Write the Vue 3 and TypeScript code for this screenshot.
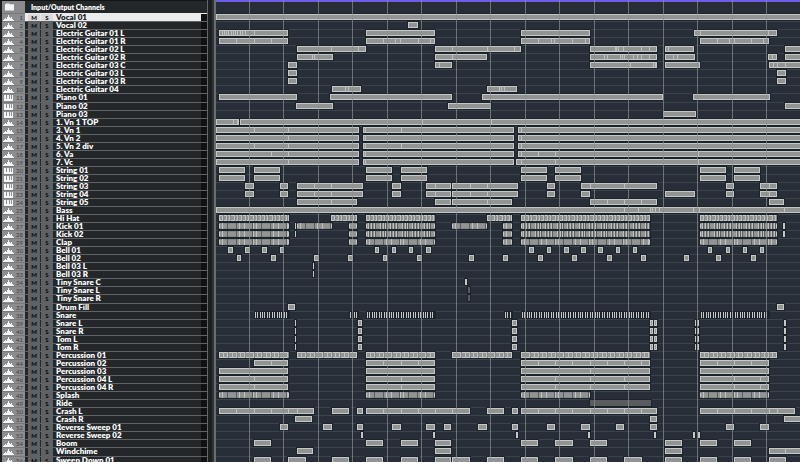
<script setup lang="ts">
type Kind = 'audio' | 'midi'
type Style = 'clip' | 'hat' | 'kick' | 'pulse' | 'ticks' | 'perc' | 'muted'

interface Track {
  name: string
  kind: Kind
  style: Style
  clips: string
}

interface Lane {
  halo: string
  edge: string
  body: string
  light: string
  shade: string
  dark: string
}

// Position on the timeline ruler where the visible range begins.
const VIEW_START = 216
const VIEW_END = 2400

const track = (name: string, clips: string, style: Style = 'clip', kind: Kind = 'audio'): Track => ({
  name,
  kind,
  style,
  clips,
})

// Clips are written as "start-end:cut,cut"; separate clips are divided by spaces.
const full = `216-${VIEW_END}`
const pads = '219-245 254-280 366-392 401-427 521-547 555-581 700-726 734-760'
const hats = '219-289 331-357 366-435 487-512 521-650 700-777'
const hits = '295-296 358-362 512-517 650-653 654-657 695-696 697-699 784-786'
const loops = '219-288:254 366-435:401 521-650:555,590,624 700-769:734,760'

const tracks: Track[] = [
  track('Vocal 01', full),
  track('Vocal 02', '408-418'),
  track('Electric Guitar 01 L', '219-288:222,224,226,228,231,233,235,237,240,242,245,254,283 366-435 521-590 694-777:697,700,768'),
  track('Electric Guitar 01 R', '219-288:236,249,254,271,283 366-435:383,395,400,418,430 521-590:538,551,554,572,585 700-769:717,729,734,751,763'),
  track('Electric Guitar 02 L', '297-366:331,358 435-521:452,487,514 590-657:615,616,618,623,641,649 665-694:668 785-2400'),
  track('Electric Guitar 02 R', '297-333:312,314 435-487:452 590-657:604,607,620,622,624,633,637,641,649 665-695:673,677 768-777:772 785-2400'),
  track('Electric Guitar 03 C', '288-297 435-452:439 590-657:628,630,653,655 665-700 769-2400:773,777,785'),
  track('Electric Guitar 03 L', '288-297 777-786'),
  track('Electric Guitar 03 R', '288-297 777-786'),
  track('Electric Guitar 04', '332-361:345,348 487-517:499,501,504'),
  track('Piano 01', '219-297 330-452 482-663 693-770', 'clip', 'midi'),
  track('Piano 02', '296-333 448-491 785-2400', 'clip', 'midi'),
  track('Piano 03', '663-696', 'clip', 'midi'),
  track('1. Vn 1 TOP', '216-239:233,237 240-2400:387,422,491,594'),
  track('3. Vn 1', '216-359:254,288 363-514:365,401 518-2400:521'),
  track('4. Vn 2', '216-359:288 363-514:365 518-2400:521'),
  track('5. Vn 2 div', '216-359:254,288 363-514:365,401 518-2400:521'),
  track('6. Va', '216-359:271,288 363-514:365,456 518-2400:521,538,555,698'),
  track('7. Vc', '216-359:288 363-514:365 516-2400:521,555,698'),
  track('String 01', pads, 'clip', 'midi'),
  track('String 02', pads, 'clip', 'midi'),
  track('String 03', '245-254 280-288 297-363:314,331 392-401 426-451:435 452-518:470,487 547-555 581-657:590,624 726-734 760-777:769', 'clip', 'midi'),
  track('String 04', '245-254 280-288 297-363:314,331 392-401 426-451:435 452-518:470,487 547-555 581-590 665-695 726-734 760-777:769', 'clip', 'midi'),
  track('String 05', '297-357:331 435-451 452-512:487 590-657:607,624,641 769-784', 'clip', 'midi'),
  track('Bass', `${full}:624,638,650,652,655,659,693,699,784`),
  track('Hi Hat', hats, 'hat'),
  track('Kick 01', '219-289 295-296 297-332 349-357 366-435 452-487 503-512 521-650 700-777 783-785', 'kick'),
  track('Kick 02', '219-289 295-296 349-357 366-435 503-512 521-650 700-777 783-785', 'kick'),
  track('Clap', '219-289 349-357 366-435 503-512 521-650 700-777', 'pulse'),
  track('Bell 01', '228-233 245-250 262-267 280-284 375-379 392-396 409-413 426-431 529-534 547-551 564-569 581-586 598-603 616-620 633-637 708-712 726-730 743-747 760-764'),
  track('Bell 02', '237-241 271-276 314-319 348-353 383-387 417-422 469-474 503-508 538-543 572-577 607-612 641-646 684-689 716-721 751-756'),
  track('Bell 03 L', '313-314'),
  track('Bell 03 R', '313-314'),
  track('Tiny Snare C', '465-467'),
  track('Tiny Snare L', '468-470', 'muted'),
  track('Tiny Snare R', '468-470', 'muted'),
  track('Drum Fill', '288-295 777-784'),
  track('Snare', '255-289 350-351 354-358 367-435 505-512 522-650 701-769', 'ticks'),
  track('Snare L', hits),
  track('Snare R', hits),
  track('Tom L', hits),
  track('Tom R', hits),
  track('Percussion 01', '219-289 297-357 366-435 452-512 521-650 700-777', 'perc'),
  track('Percussion 02', '254-288:271 366-435:383,401,418 521-650:538,555,572,590,607,624,641 700-769:717,734,751'),
  track('Percussion 03', '219-288 366-435 521-650:590 700-769'),
  track('Percussion 04 L', loops),
  track('Percussion 04 R', loops),
  track('Splash', '219-289 366-435 521-590 700-769', 'pulse'),
  track('Ride', '590-651', 'muted'),
  track('Crash L', '219-314:236,254,271,288,297 332-349 357-363 366-470:383,401,418,435,452 487-504 512-518 521-657:538,555,572,590,607,624,641 700-795:717,734,751,769,777'),
  track('Crash R', '295-312 650-657 784-2400'),
  track('Reverse Sweep 01', '280-288 323-332 357-363 392-401 426-435 444-451 478-487 512-518 547-555 581-590 616-624 650-657 726-734 760-769'),
  track('Reverse Sweep 02', '361-363 433-435 516-518 588-590 654-656 693-695 698-700'),
  track('Boom', '254-271 366-383 401-418 435-451 521-538 555-573 590-607 665-682 700-717 734-751'),
  track('Windchime', '297-313 435-451 665-682 769-2400:785'),
  track('Sweep Down 01', '254-271 288-306 332-349 366-383 401-418 435-451 452-470 487-504 521-538 555-573 590-607 624-642 665-682 700-717 734-751 769-786'),
]

// Tracks that take up the spare pixel of the list's uneven row spacing.
const tall = new Set([10, 35, 54])

const box = (x: number, y: number, w: number, h: number) => `M${x} ${y}h${w}v${h}h${-w}z`

// Marks inside a rhythmic clip: cycles through the steps, giving each position.
function cycle(start: number, end: number, steps: number[]): number[] {
  const marks: number[] = []
  let x = start
  for (let i = 0; x < end; i++) {
    marks.push(x)
    x += steps[i % steps.length]
  }
  return marks
}

function draw(t: Track): Lane {
  const lane: Lane = { halo: '', edge: '', body: '', light: '', shade: '', dark: '' }
  for (const item of t.clips.split(' ')) {
    const [range, cuts] = item.split(':')
    const [from, to] = range.split('-').map(Number)
    const x = from - VIEW_START
    const end = to - VIEW_START
    const w = end - x
    lane.halo += box(x - 1, 0, w + 2, 8)
    if (t.style === 'muted') {
      lane.dark += box(x, 1, w, 6)
      continue
    }
    if (t.style === 'ticks') {
      for (const m of cycle(x, end, [2, 3, 2, 2, 3, 2, 3])) lane.edge += box(m, 1, 1, 6)
      continue
    }
    lane.edge += box(x, 1, w, 6)
    if (w > 2) lane.body += box(x + 1, 2, w - 2, 4)
    if (cuts) for (const c of cuts.split(',')) lane.light += box(Number(c) - VIEW_START, 1, 1, 6)
    if (w < 3) continue
    if (t.style === 'hat') {
      for (const m of cycle(x + 3, end - 1, [4, 3, 5, 3, 4])) {
        lane.light += box(m, 1, 1, 6)
        lane.shade += box(m + 1, 1, 1, 6)
      }
    } else if (t.style === 'perc') {
      for (const m of cycle(x + 4, end - 1, [4, 5, 4, 4])) lane.light += box(m, 1, 1, 6)
      for (const m of cycle(x + 8, end - 1, [9, 8])) lane.shade += box(m + 1, 1, 1, 6)
    } else if (t.style === 'kick' || t.style === 'pulse') {
      lane.shade += box(x, 1, w, 1) + box(x, 6, w, 1)
      const busy = t.style === 'kick' && w > 40 && from > 300
      if (busy) {
        for (const m of cycle(x + 2, end - 1, [3, 3, 6, 3, 2, 5])) {
          lane.light += box(m, 1, 1, 6)
          lane.dark += box(m + 1, 1, 1, 6)
        }
      } else {
        for (const m of cycle(x + 3, end - 1, [5, 9, 3])) lane.light += box(m, 1, 1, 6)
        for (const m of cycle(x + 8, end - 1, [9, 16, 9])) lane.dark += box(m, 1, 1, 6)
      }
    }
  }
  return lane
}

const lanes = tracks.map(draw)
const bars = Array.from({ length: 60 }, (_, i) => Math.round(33 + i * 34.47))
</script>

<template>
  <main class="project">
    <section class="tracks">
      <header class="heading">
        <span class="gutter">
          <svg class="folder" viewBox="0 0 10 8" aria-hidden="true">
            <path d="M0 1h1V0h4v1h5v7H0z" />
          </svg>
        </span>
        <span class="title">Input/Output Channels</span>
      </header>
      <ol class="list">
        <li
          v-for="(t, i) in tracks"
          :key="t.name"
          class="row"
          :class="{ tall: tall.has(i), selected: i === 0 }"
        >
          <span class="gutter">
            <svg v-if="t.kind === 'audio'" class="icon" viewBox="0 0 11 6" aria-hidden="true">
              <path d="M0 6V5h1V4h1V3h1v1h1V2h1V0h1v2h1v1h1V2h1v2h1v1h1v1z" />
            </svg>
            <svg v-else class="icon" viewBox="0 0 11 6" aria-hidden="true">
              <path d="M1 0h2v4h1V0h2v4h1V0h1v4h1V0h1v6H1z" />
            </svg>
            <span class="number">{{ i + 1 }}</span>
          </span>
          <button class="toggle" type="button" :aria-label="`Mute ${t.name}`">M</button>
          <button class="toggle" type="button" :aria-label="`Solo ${t.name}`">S</button>
          <span class="name">{{ t.name }}</span>
          <span class="meter"></span>
        </li>
      </ol>
    </section>
    <div class="divider"></div>
    <section class="timeline">
      <div class="ruler"></div>
      <div class="lanes">
        <svg
          v-for="(lane, i) in lanes"
          :key="i"
          class="lane"
          :class="{ tall: tall.has(i) }"
          shape-rendering="crispEdges"
          aria-hidden="true"
        >
          <path class="halo" :d="lane.halo" />
          <path class="edge" :d="lane.edge" />
          <path class="body" :d="lane.body" />
          <path class="shade" :d="lane.shade" />
          <path class="light" :d="lane.light" />
          <path class="dark" :d="lane.dark" />
        </svg>
      </div>
      <svg class="bars" shape-rendering="crispEdges" aria-hidden="true">
        <rect v-for="x in bars" :key="x" :x="x" y="0" width="1" height="100%" />
      </svg>
    </section>
  </main>
</template>

<style>
body {
  margin: 0;
  background: #1c1e20;
}
</style>

<style scoped>
.project {
  display: flex;
  height: 100vh;
  overflow: hidden;
  background: #1f2225;
  color: #ffffff;
  font-family: Lato, 'Open Sans', sans-serif;
  font-size: 8px;
  font-weight: 800;
}

.tracks {
  flex: none;
  width: 207px;
  border-right: 1px solid #64676a;
}

.heading {
  display: flex;
  height: 13px;
  background: #24272a;
  border-top: 1px solid #111315;
  box-sizing: border-box;
}

.gutter {
  display: flex;
  align-items: center;
  justify-content: space-between;
  box-sizing: border-box;
  width: 25px;
  padding: 0 2px 0 3px;
  border-left: 2px solid #1a1c1e;
  background: #898b8c;
}

.folder {
  width: 9px;
  height: 8px;
  fill: #f4f4f4;
}

.title {
  padding-left: 6px;
  font-size: 7px;
  line-height: 12px;
}

.list {
  margin: 0;
  padding: 0;
  list-style: none;
}

.row {
  display: flex;
  box-sizing: border-box;
  height: 8px;
  padding-top: 1px;
  overflow: hidden;
  background: linear-gradient(#606365 1px, #232729 1px);
}

.row.tall {
  height: 9px;
}

.row .gutter {
  margin-top: -1px;
  padding-top: 1px;
  background: linear-gradient(#77797a 1px, #8b8d8e 1px);
}

.icon {
  width: 11px;
  height: 6px;
  margin-left: -2px;
  fill: #f6f6f6;
}

.number {
  color: #3c3e40;
  font-size: 6px;
  font-weight: 400;
  line-height: 6px;
}

.toggle {
  flex: none;
  width: 12px;
  margin: 0 0 0 1px;
  padding: 0;
  border: 0;
  background: #5f6264;
  color: #0b0c0d;
  font-family: inherit;
  font-size: 6px;
  font-weight: 900;
  line-height: 6px;
}

.gutter + .toggle {
  margin-left: 3px;
}

.name {
  flex: 1;
  margin-left: 1px;
  padding-left: 2px;
  line-height: 6px;
  white-space: nowrap;
}

.meter {
  width: 6px;
  background: #0f1112;
}

.row.selected {
  background: #ececec;
}

.row.selected .toggle {
  background: #dadada;
}

.row.selected .name {
  color: #17191b;
}

.divider {
  flex: none;
  width: 6px;
  border-right: 2px solid #6b6e6f;
  background: linear-gradient(90deg, #1c1f21 4px, #303335 4px);
}

.timeline {
  position: relative;
  flex: 1;
  min-width: 0;
  background: #272e37;
}

.ruler {
  box-sizing: border-box;
  height: 13px;
  border-top: 2px solid #6f5ee8;
}

.lanes {
  display: flex;
  flex-direction: column;
}

.lane {
  display: block;
  flex: none;
  box-sizing: border-box;
  width: 100%;
  height: 8px;
  background: linear-gradient(#3b434c 1px, transparent 1px);
}

.lane.tall {
  height: 9px;
}

.halo {
  fill: #1d232b;
}

.edge {
  fill: #c6c7c7;
}

.body {
  fill: #929393;
}

.shade {
  fill: #858788;
}

.light {
  fill: #bfc0c0;
}

.dark {
  fill: #5a5c5e;
}

.bars {
  position: absolute;
  inset: 0;
  width: 100%;
  height: 100%;
  fill: #8a9092;
  opacity: 0.7;
  pointer-events: none;
}
</style>
